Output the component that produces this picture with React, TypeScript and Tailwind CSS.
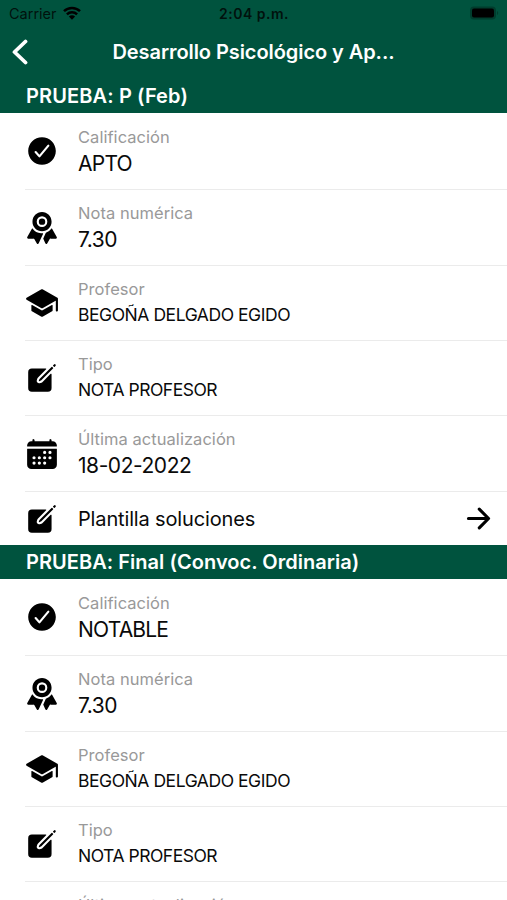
import type { ReactNode } from 'react';
import {
  IoArrowForward,
  IoCalendar,
  IoCheckmarkCircle,
  IoCreate,
  IoRibbon,
  IoSchool
} from 'react-icons/io5';

interface Field {
  icon: ReactNode;
  label: string;
  value: string;
  size: 'lg' | 'sm';
  tracking: string;
}

interface Exam {
  title: string;
  titleTracking: string;
  fields: Field[];
}

const buildFields = (grade: string, gradeTracking: string): Field[] => [
  {
    icon: <IoCheckmarkCircle />,
    label: 'Calificación',
    value: grade,
    size: 'lg',
    tracking: gradeTracking
  },
  {
    icon: <IoRibbon />,
    label: 'Nota numérica',
    value: '7.30',
    size: 'lg',
    tracking: 'tracking-[-0.5px]'
  },
  {
    icon: <IoSchool />,
    label: 'Profesor',
    value: 'BEGOÑA DELGADO EGIDO',
    size: 'sm',
    tracking: 'tracking-[-0.45px]'
  },
  {
    icon: <IoCreate />,
    label: 'Tipo',
    value: 'NOTA PROFESOR',
    size: 'sm',
    tracking: 'tracking-[-0.48px]'
  },
  {
    icon: <IoCalendar />,
    label: 'Última actualización',
    value: '18-02-2022',
    size: 'lg',
    tracking: 'tracking-[-0.45px]'
  }
];

const exams: Exam[] = [
  {
    title: 'PRUEBA: P (Feb)',
    titleTracking: 'tracking-[0.12px]',
    fields: buildFields('APTO', 'tracking-[-0.75px]')
  },
  {
    title: 'PRUEBA: Final (Convoc. Ordinaria)',
    titleTracking: 'tracking-[0.04px]',
    fields: buildFields('NOTABLE', 'tracking-[-0.8px]')
  }
];

function StatusBar() {
  return (
    <div className="grid h-7 grid-cols-3 items-center pr-2 pl-[9px] text-[14.5px] text-black/80">
      <div className="flex items-center gap-[6px]">
        <span className="leading-none">Carrier</span>
        <svg className="-mt-0.5 h-[14px] w-[18px]" viewBox="0 0 18 14" fill="none">
          <path
            d="M1 5.2a11.4 11.4 0 0 1 16 0M3.9 8.3a7.3 7.3 0 0 1 10.2 0"
            stroke="black"
            strokeWidth="2.5"
          />
          <path d="M9 13.7 5.9 10.5a4.4 4.4 0 0 1 6.2 0Z" fill="black" />
        </svg>
      </div>
      <span className="text-center text-[14px] leading-none font-semibold tracking-[0.5px] whitespace-nowrap">
        2:04 p.m.
      </span>
      <svg
        className="-mt-0.5 h-[14px] w-[30px] justify-self-end"
        viewBox="0 0 30 14"
      >
        <rect x="1" y="0.5" width="26" height="13" rx="4" fill="#003d2d" />
        <rect x="3" y="2.5" width="22" height="9" rx="2" fill="black" />
        <path d="M28 5v4c1.6-.7 1.6-3.3 0-4Z" fill="#003d2d" />
      </svg>
    </div>
  );
}

function NavBar() {
  return (
    <div className="flex h-[51px] items-center pb-[3px]">
      <svg
        className="ml-3 h-[26px] w-4"
        viewBox="0 0 16 26"
        fill="none"
        stroke="white"
        strokeWidth="3.8"
        strokeLinecap="round"
        strokeLinejoin="round"
      >
        <path d="M13.5 2.5 2.5 13l11 10.5" />
      </svg>
      <h1 className="mr-7 flex-1 text-center text-[20px] font-semibold tracking-[-0.07px] text-white">
        Desarrollo Psicológico y Ap...
      </h1>
    </div>
  );
}

function FieldRow({ field, first }: { field: Field; first: boolean }) {
  const large = field.size === 'lg';
  const height = first ? 'h-[77px]' : large ? 'h-[76px]' : 'h-[75px]';
  return (
    <div className={`flex pl-[25px] ${height}`}>
      <div className="flex flex-1 items-center border-b border-[#ebebeb]">
        <div className={`w-[53px] text-[34px] ${first ? 'pb-px' : ''}`}>
          {field.icon}
        </div>
        <div className={first ? 'pt-[4px]' : 'pt-[2px]'}>
          <p className="text-[16.5px] leading-[22px] tracking-[0.04px] text-[#999]">
            {field.label}
          </p>
          <p
            className={`text-[#0a0a0a] ${large ? 'text-[21px] leading-[32px]' : 'text-[17.5px] leading-[30px]'} ${field.tracking}`}
          >
            {field.value}
          </p>
        </div>
      </div>
    </div>
  );
}

function ExamSection({ exam }: { exam: Exam }) {
  return (
    <section>
      <h2
        className={`flex h-[34px] items-center bg-[#00533e] pl-[26px] text-[20px] font-semibold text-white ${exam.titleTracking}`}
      >
        {exam.title}
      </h2>
      {exam.fields.map((field, index) => (
        <FieldRow key={field.label} field={field} first={index === 0} />
      ))}
      <div className="flex h-[53px] items-center pr-3 pl-[25px]">
        <div className="w-[53px] text-[34px]">
          <IoCreate />
        </div>
        <p className="flex-1 text-[20px] tracking-[-0.15px] text-[#0a0a0a]">
          Plantilla soluciones
        </p>
        <IoArrowForward className="text-[33px]" />
      </div>
    </section>
  );
}

export default function App() {
  return (
    <main className="h-[900px] overflow-hidden bg-white font-['Inter',sans-serif] text-black">
      <header className="bg-[#00533e]">
        <StatusBar />
        <NavBar />
      </header>
      {exams.map((exam) => (
        <ExamSection key={exam.title} exam={exam} />
      ))}
    </main>
  );
}
